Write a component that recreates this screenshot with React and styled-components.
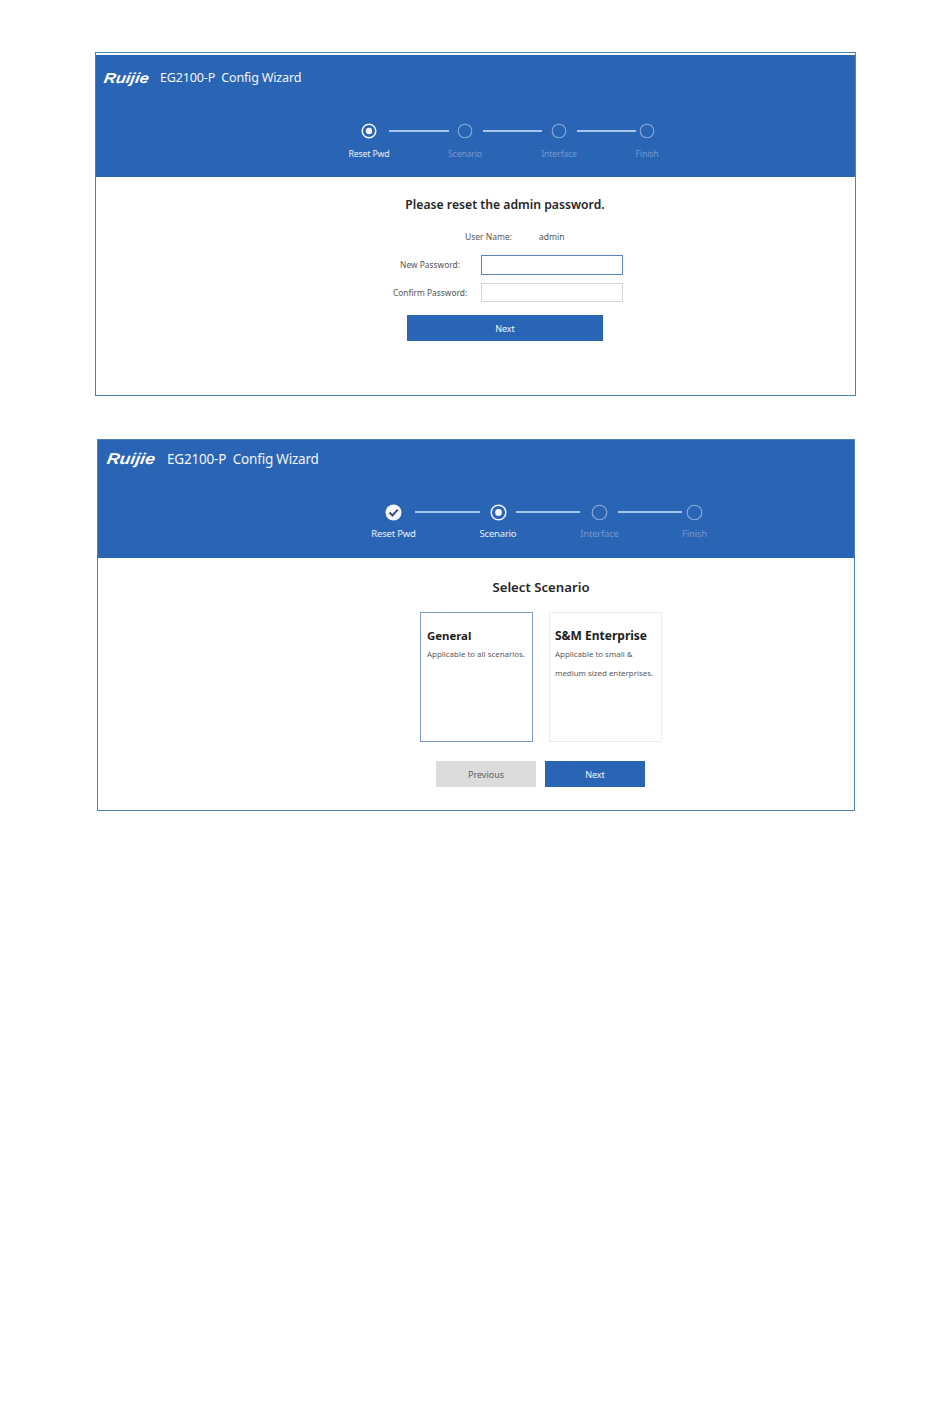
import React from "react";
import styled, { createGlobalStyle } from "styled-components";

const Global = createGlobalStyle`
  html, body { margin: 0; padding: 0; background: #fff; }
  body { font-family: "Noto Sans", "Open Sans", "Liberation Sans", sans-serif; color: #333; }
  * { box-sizing: border-box; }
`;

const Page = styled.div`
  width: 950px;
  height: 1420px;
  padding-top: 52px;
  display: flex;
  flex-direction: column;
  align-items: flex-start;
  gap: 43px;
  overflow: hidden;
`;

const Panel = styled.section`
  margin-left: ${(p) => p.$left}px;
  width: ${(p) => p.$width}px;
  height: ${(p) => p.$height}px;
  border: 1px solid #4c82b4;
  padding-top: ${(p) => p.$gapTop}px;
  background: #fff;
`;

const Header = styled.header`
  height: ${(p) => p.$height}px;
  background: #2a64b4;
  padding-left: ${(p) => p.$brandLeft}px;
  padding-top: ${(p) => p.$brandTop}px;
  color: #fff;
`;

const Brand = styled.div`
  display: flex;
  align-items: center;
  height: 20px;
  gap: ${(p) => p.$gap}px;
`;

const Logo = styled.span`
  font-family: "Liberation Sans", sans-serif;
  font-style: italic;
  font-weight: 700;
  font-size: ${(p) => p.$size}px;
  line-height: 20px;
  color: #fff;
  transform: scaleX(1.14) skewX(-8deg);
  transform-origin: left center;
  width: ${(p) => p.$width}px;
  white-space: nowrap;
`;

const ProductTitle = styled.span`
  font-size: ${(p) => p.$size}px;
  line-height: 20px;
  color: #f2f6fc;
  white-space: pre;
  letter-spacing: -0.2px;
`;

const Stepper = styled.div`
  margin-top: ${(p) => p.$top}px;
  margin-left: ${(p) => p.$left}px;
`;

const Markers = styled.div`
  display: flex;
  align-items: center;
  height: 18px;
`;

const Connector = styled.span`
  display: block;
  flex: none;
  width: ${(p) => p.$width}px;
  height: 1.5px;
  margin: 0 ${(p) => p.$right}px 0 ${(p) => p.$leftGap}px;
  background: #a9c5ea;
`;

const MarkerIcon = styled.svg`
  display: block;
  flex: none;
`;

const Labels = styled.div`
  display: flex;
  margin-top: ${(p) => p.$top}px;
  margin-left: ${(p) => p.$shift}px;
`;

const StepLabel = styled.span`
  width: 60px;
  flex: none;
  margin-right: ${(p) => p.$spacing - 60}px;
  text-align: center;
  white-space: nowrap;
  font-size: ${(p) => p.$size}px;
  line-height: 14px;
  letter-spacing: -0.2px;
  color: ${(p) => (p.$on ? "#e8effa" : "#7399d1")};
`;

const Heading = styled.h2`
  margin: 0;
  font-weight: 600;
  font-size: ${(p) => p.$size}px;
  line-height: 20px;
  color: #262626;
  text-align: center;
  white-space: nowrap;
`;

const FormBody = styled.div`
  padding-top: 18px;
`;

const FormHeading = styled(Heading)`
  margin-left: 209px;
  width: 400px;
`;

const FormRows = styled.div`
  margin-top: 15px;
  margin-left: 297px;
  display: flex;
  flex-direction: column;
`;

const ValueRow = styled.div`
  display: flex;
  align-items: center;
  height: 14px;
  margin-left: 72px;
  gap: 27px;
  margin-bottom: 11px;
`;

const Text = styled.span`
  font-size: 8.5px;
  line-height: 14px;
  color: #555;
  white-space: nowrap;
`;

const FieldRow = styled.div`
  display: flex;
  align-items: center;
  margin-bottom: ${(p) => p.$bottom}px;
`;

const FieldLabel = styled.label`
  width: 74px;
  margin-right: 14px;
  text-align: center;
  font-size: 8.4px;
  line-height: 14px;
  color: #555;
  white-space: nowrap;
`;

const Field = styled.input`
  display: block;
  width: 142px;
  height: ${(p) => p.$height}px;
  padding: 0;
  background: #fff;
  outline: none;
  border: 1px solid ${(p) => (p.$focus ? "#5b84b8" : "#d6d6d6")};
`;

const PrimaryButton = styled.button`
  display: block;
  border: 0;
  padding: 0;
  width: ${(p) => p.$width}px;
  height: ${(p) => p.$height}px;
  background: ${(p) => (p.$muted ? "#dcdcdc" : "#2a64b4")};
  color: ${(p) => (p.$muted ? "#5c5c5c" : "#f2f6fc")};
  font-family: inherit;
  font-size: 9px;
  text-align: center;
`;

const FormButton = styled(PrimaryButton)`
  margin-left: 14px;
`;

const ScenarioBody = styled.div`
  padding-top: 19px;
`;

const ScenarioHeading = styled(Heading)`
  margin-left: 329px;
  width: 228px;
`;

const CardRow = styled.div`
  display: flex;
  gap: 16px;
  margin: 15px 0 0 322px;
`;

const Card = styled.div`
  width: 113px;
  height: 130px;
  padding: 14px 0 0 ${(p) => p.$inset}px;
  border: 1px solid ${(p) => (p.$selected ? "#7c9cc8" : "#ececec")};
  background: #fff;
`;

const CardTitle = styled.div`
  font-size: ${(p) => p.$size}px;
  font-weight: 700;
  line-height: 18px;
  color: #1c1c1c;
  white-space: nowrap;
`;

const CardText = styled.div`
  font-size: 7.9px;
  line-height: 19px;
  color: #5a5a5a;
  white-space: nowrap;
`;

const ButtonRow = styled.div`
  display: flex;
  gap: 9px;
  margin: 19px 0 0 338px;
`;

function Ring({ size, state }) {
  const c = size / 2;
  const r = c - 1;
  return (
    <MarkerIcon width={size} height={size} viewBox={`0 0 ${size} ${size}`}>
      {state === "done" ? (
        <>
          <circle cx={c} cy={c} r={c - 0.5} fill="#f4f7fb" />
          <path
            d={`M${c - 4} ${c} L${c - 1} ${c + 3} L${c + 4.2} ${c - 2.8}`}
            fill="none"
            stroke="#34507c"
            strokeWidth="1.9"
          />
        </>
      ) : state === "active" ? (
        <>
          <circle cx={c} cy={c} r={r - 0.2} fill="none" stroke="#f2f6fc" strokeWidth="1.5" />
          <circle cx={c} cy={c} r={size * 0.2} fill="#f6f8fc" />
        </>
      ) : (
        <circle cx={c} cy={c} r={r - 0.2} fill="none" stroke="#8dadd9" strokeWidth="1.1" />
      )}
    </MarkerIcon>
  );
}

function Steps({ states, size, lines, spacing, labelTop, labelSize, top, left }) {
  const names = ["Reset Pwd", "Scenario", "Interface", "Finish"];
  return (
    <Stepper $top={top} $left={left}>
      <Markers>
        {states.map((s, i) => (
          <React.Fragment key={names[i]}>
            <Ring size={size} state={s} />
            {i < 3 && <Connector $leftGap={lines[i][0]} $width={lines[i][1]} $right={lines[i][2]} />}
          </React.Fragment>
        ))}
      </Markers>
      <Labels $top={labelTop} $shift={-(60 - size) / 2}>
        {names.map((n, i) => (
          <StepLabel key={n} $spacing={spacing[i]} $size={labelSize} $on={states[i] !== "idle"}>
            {n}
          </StepLabel>
        ))}
      </Labels>
    </Stepper>
  );
}

export default function App() {
  return (
    <Page>
      <Global />
      <Panel $left={95} $width={761} $height={344} $gapTop={2}>
        <Header $height={122} $brandLeft={8} $brandTop={13}>
          <Brand $gap={9}>
            <Logo $size={14.5} $width={47}>Ruijie</Logo>
            <ProductTitle $size={12.6}>{"EG2100-P  Config Wizard"}</ProductTitle>
          </Brand>
          <Steps
            states={["active", "idle", "idle", "idle"]}
            size={16}
            lines={[[12, 60, 8], [10, 59, 9], [10, 59, 3]]}
            spacing={[96, 94, 88, 60]}
            labelTop={7}
            labelSize={8.8}
            top={34}
            left={257}
          />
        </Header>
        <FormBody>
          <FormHeading $size={12.2}>Please reset the admin password.</FormHeading>
          <FormRows>
            <ValueRow>
              <Text>User Name:</Text>
              <Text>admin</Text>
            </ValueRow>
            <FieldRow $bottom={8}>
              <FieldLabel>New Password:</FieldLabel>
              <Field $focus $height={20} aria-label="New Password" />
            </FieldRow>
            <FieldRow $bottom={13}>
              <FieldLabel>Confirm Password:</FieldLabel>
              <Field $height={19} aria-label="Confirm Password" />
            </FieldRow>
            <FormButton $width={196} $height={26}>Next</FormButton>
          </FormRows>
        </FormBody>
      </Panel>
      <Panel $left={97} $width={758} $height={372} $gapTop={0}>
        <Header $height={118} $brandLeft={9} $brandTop={9}>
          <Brand $gap={10}>
            <Logo $size={15.5} $width={50}>Ruijie</Logo>
            <ProductTitle $size={13.5}>{"EG2100-P  Config Wizard"}</ProductTitle>
          </Brand>
          <Steps
            states={["done", "active", "idle", "idle"]}
            size={17}
            lines={[[13, 65, 9.5], [9.5, 64, 11], [10, 64, 4]]}
            spacing={[104.5, 101.5, 95, 60]}
            labelTop={6}
            labelSize={9.5}
            top={34}
            left={278}
          />
        </Header>
        <ScenarioBody>
          <ScenarioHeading $size={13.2}>Select Scenario</ScenarioHeading>
          <CardRow>
            <Card $selected $inset={6}>
              <CardTitle $size={11.4}>General</CardTitle>
              <CardText>Applicable to all scenarios.</CardText>
            </Card>
            <Card $inset={5}>
              <CardTitle $size={12}>S&amp;M Enterprise</CardTitle>
              <CardText>
                Applicable to small &amp;
                <br />
                medium sized enterprises.
              </CardText>
            </Card>
          </CardRow>
          <ButtonRow>
            <PrimaryButton $muted $width={100} $height={26}>Previous</PrimaryButton>
            <PrimaryButton $width={100} $height={26}>Next</PrimaryButton>
          </ButtonRow>
        </ScenarioBody>
      </Panel>
    </Page>
  );
}
